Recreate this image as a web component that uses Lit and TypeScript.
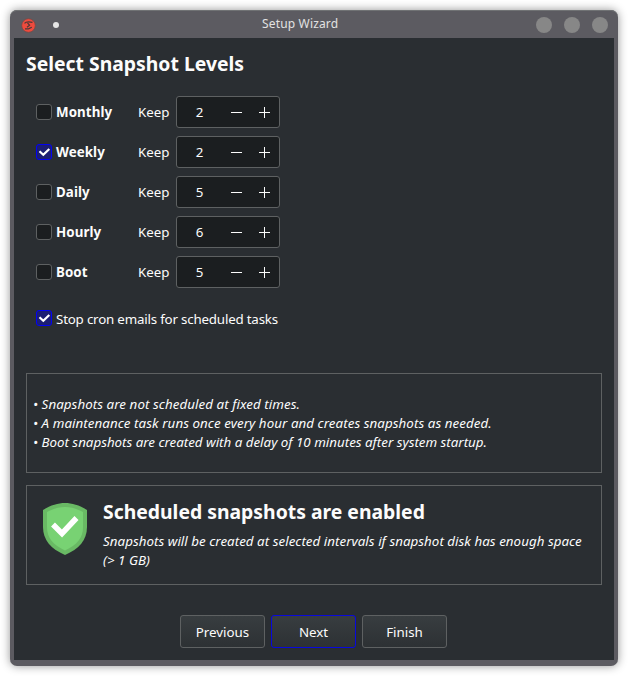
import { LitElement, html, css, svg } from "lit";
import { customElement, property, state } from "lit/decorators.js";
import { classMap } from "lit/directives/class-map.js";

interface Level {
  name: string;
  on: boolean;
  keep: number;
}

@customElement("check-box")
class CheckBox extends LitElement {
  @property({ type: Boolean }) checked = false;

  static styles = css`
    :host { display: block; width: 16px; height: 16px; flex: none; }
    .box {
      box-sizing: border-box; width: 16px; height: 16px;
      border: 1px solid #5e6162; border-radius: 3px; background: #1b1e20;
    }
    .box.on { border-color: #0202f4; background: #1c1e73; }
    svg { display: block; width: 14px; height: 14px; }
  `;

  render() {
    return html`<div class=${classMap({ box: true, on: this.checked })}>
      ${this.checked
        ? html`<svg viewBox="0 0 14 14"><path d="M2.5 6.300 L6.300 9.800 L12.3 4" fill="none" stroke="#fff" stroke-width="2.200"/></svg>`
        : null}
    </div>`;
  }
}

@customElement("spin-button")
class SpinButton extends LitElement {
  @property({ type: Number }) value = 0;

  static styles = css`
    :host {
      display: flex; box-sizing: border-box; width: 104px; height: 32px; align-items: center;
      border: 1px solid #5e6162; border-radius: 3px; background: #1b1e20; color: #fcfcfc;
    }
    .value { width: 45px; text-align: center; line-height: 30px; height: 30px; }
    svg { display: block; width: 57px; height: 30px; }
  `;

  render() {
    return html`<div class="value">${this.value}</div>
      <svg viewBox="0 0 57 30" fill="#fcfcfc" shape-rendering="crispEdges">
        <rect x="9" y="15" width="11" height="1"/>
        <rect x="37" y="15" width="11" height="1"/>
        <rect x="42" y="10" width="1" height="11"/>
      </svg>`;
  }
}

const shield = svg`
  <path d="M23 0C30 0 37 2 45 7V24C45 37 37 46 23 52C9 46 1 37 1 24V7C9 2 16 0 23 0Z" fill="#69b964"/>
  <path d="M23 4C30 4 35 6 41 9V24C41 35 35 42 23 47.500C11 42 5 35 5 24V9C11 6 16 4 23 4Z" fill="#78d273"/>
  <path d="M11 21.500L20 30.500L34.500 15" fill="none" stroke="#fff" stroke-width="5.500"/>`;

@customElement("app-root")
class AppRoot extends LitElement {
  @state() levels: Level[] = [
    { name: "Monthly", on: false, keep: 2 },
    { name: "Weekly", on: true, keep: 2 },
    { name: "Daily", on: false, keep: 5 },
    { name: "Hourly", on: false, keep: 6 },
    { name: "Boot", on: false, keep: 5 },
  ];

  static styles = css`
    :host {
      display: block; box-sizing: border-box; height: 676px; padding: 10px; overflow: hidden;
      background: #fff; color: #fcfcfc;
      font: 13.333px "Noto Sans", sans-serif;
    }
    .window {
      box-sizing: border-box; width: 608px; height: 656px; padding: 0 4px 6px;
      display: flex; flex-direction: column;
      background: #5c5b61; border-radius: 7px;
      box-shadow: 0 0 10px rgba(0, 0, 0, .42), inset 0 1px #707274;
    }
    .titlebar { height: 28px; flex: none; display: grid; grid-template-columns: 248px auto 1fr; align-items: center; }
    .left { display: flex; align-items: center; gap: 17px; padding: 2px 0 0 7px; }
    .logo { display: block; width: 15px; height: 15px; }
    .dot { width: 6px; height: 6px; border-radius: 50%; background: #e6e6e6; }
    .caption { font-size: 12px; letter-spacing: .16px; color: #e2e2e2; line-height: 28px; height: 28px; }
    .right { display: flex; justify-content: flex-end; gap: 12px; padding: 2px 6px 0 0; }
    .right i { width: 16px; height: 16px; border-radius: 50%; background: #878787; }
    .body {
      flex: 1; box-sizing: border-box; padding: 12px; background: #2a2e32;
      display: flex; flex-direction: column;
    }
    h1, h2 { margin: 0; font-size: 19.370px; font-weight: 700; line-height: 26px; white-space: nowrap; }
    h1 { padding-top: 1px; }
    .levels { display: flex; flex-direction: column; gap: 8px; margin: 19px 0 0 10px; }
    .row { display: flex; align-items: center; height: 32px; }
    .name { width: 82px; margin-left: 4px; font-weight: 700; letter-spacing: .08px; }
    .keep { width: 38px; }
    .cron { display: flex; align-items: center; gap: 4px; height: 20px; margin: 21px 0 0 10px; letter-spacing: -.19px; }
    .cron check-box { margin-top: -2px; }
    .panel { box-sizing: border-box; height: 100px; border: 1px solid #5e6162; font-style: italic; line-height: 19px; white-space: nowrap; }
    .notes { margin-top: 44px; padding: 21px 6px; }
    .notes .loose { letter-spacing: .065px; }
    .status { margin-top: 12px; display: flex; padding: 13px 15px; gap: 15px; }
    .status svg { width: 46px; height: 53px; margin-top: 4px; flex: none; }
    .status h2 { font-style: normal; }
    .status p { margin: 7px 0 0; letter-spacing: .036px; }
    .actions { display: flex; justify-content: center; gap: 6px; margin-top: 30px; padding-right: 1px; }
    .actions button {
      box-sizing: border-box; width: 85px; height: 33px; padding: 1px 0 0; font: inherit; color: #fcfcfc;
      border: 1px solid #5e6162; border-radius: 3px; background: linear-gradient(#383d40, #2d3134);
    }
    .actions .primary { border-color: #0808dd; }
  `;

  render() {
    return html`
      <div class="window">
        <div class="titlebar">
          <div class="left">
            <svg class="logo" viewBox="0 0 15 15">
              <circle cx="7.500" cy="7.500" r="6.800" fill="#ee4b3e" stroke="#7b4945" stroke-width=".8"/>
              <path d="M3.500 5.300C5 3.500 8 3.600 11.500 4.300M6.500 5L8.600 7.200L6 9.300M4 10.800H7.500L10.800 9.300" fill="none" stroke="#4e3837" stroke-width="1.200"/>
            </svg>
            <div class="dot"></div>
          </div>
          <div class="caption">Setup Wizard</div>
          <div class="right"><i></i><i></i><i></i></div>
        </div>
        <div class="body">
          <h1>Select Snapshot Levels</h1>
          <div class="levels">
            ${this.levels.map((l) => html`
              <div class="row">
                <check-box ?checked=${l.on}></check-box>
                <span class="name">${l.name}</span>
                <span class="keep">Keep</span>
                <spin-button .value=${l.keep}></spin-button>
              </div>`)}
          </div>
          <div class="cron">
            <check-box checked></check-box>
            <span>Stop cron emails for scheduled tasks</span>
          </div>
          <div class="panel notes">
            <div class="loose">• Snapshots are not scheduled at fixed times.</div>
            <div class="loose">• A maintenance task runs once every hour and creates snapshots as needed.</div>
            <div>• Boot snapshots are created with a delay of 10 minutes after system startup.</div>
          </div>
          <div class="panel status">
            <svg viewBox="0 0 46 53">${shield}</svg>
            <div>
              <h2>Scheduled snapshots are enabled</h2>
              <p>Snapshots will be created at selected intervals if snapshot disk has enough space<br>(&gt; 1 GB)</p>
            </div>
          </div>
          <div class="actions">
            <button>Previous</button>
            <button class="primary">Next</button>
            <button>Finish</button>
          </div>
        </div>
      </div>`;
  }
}
